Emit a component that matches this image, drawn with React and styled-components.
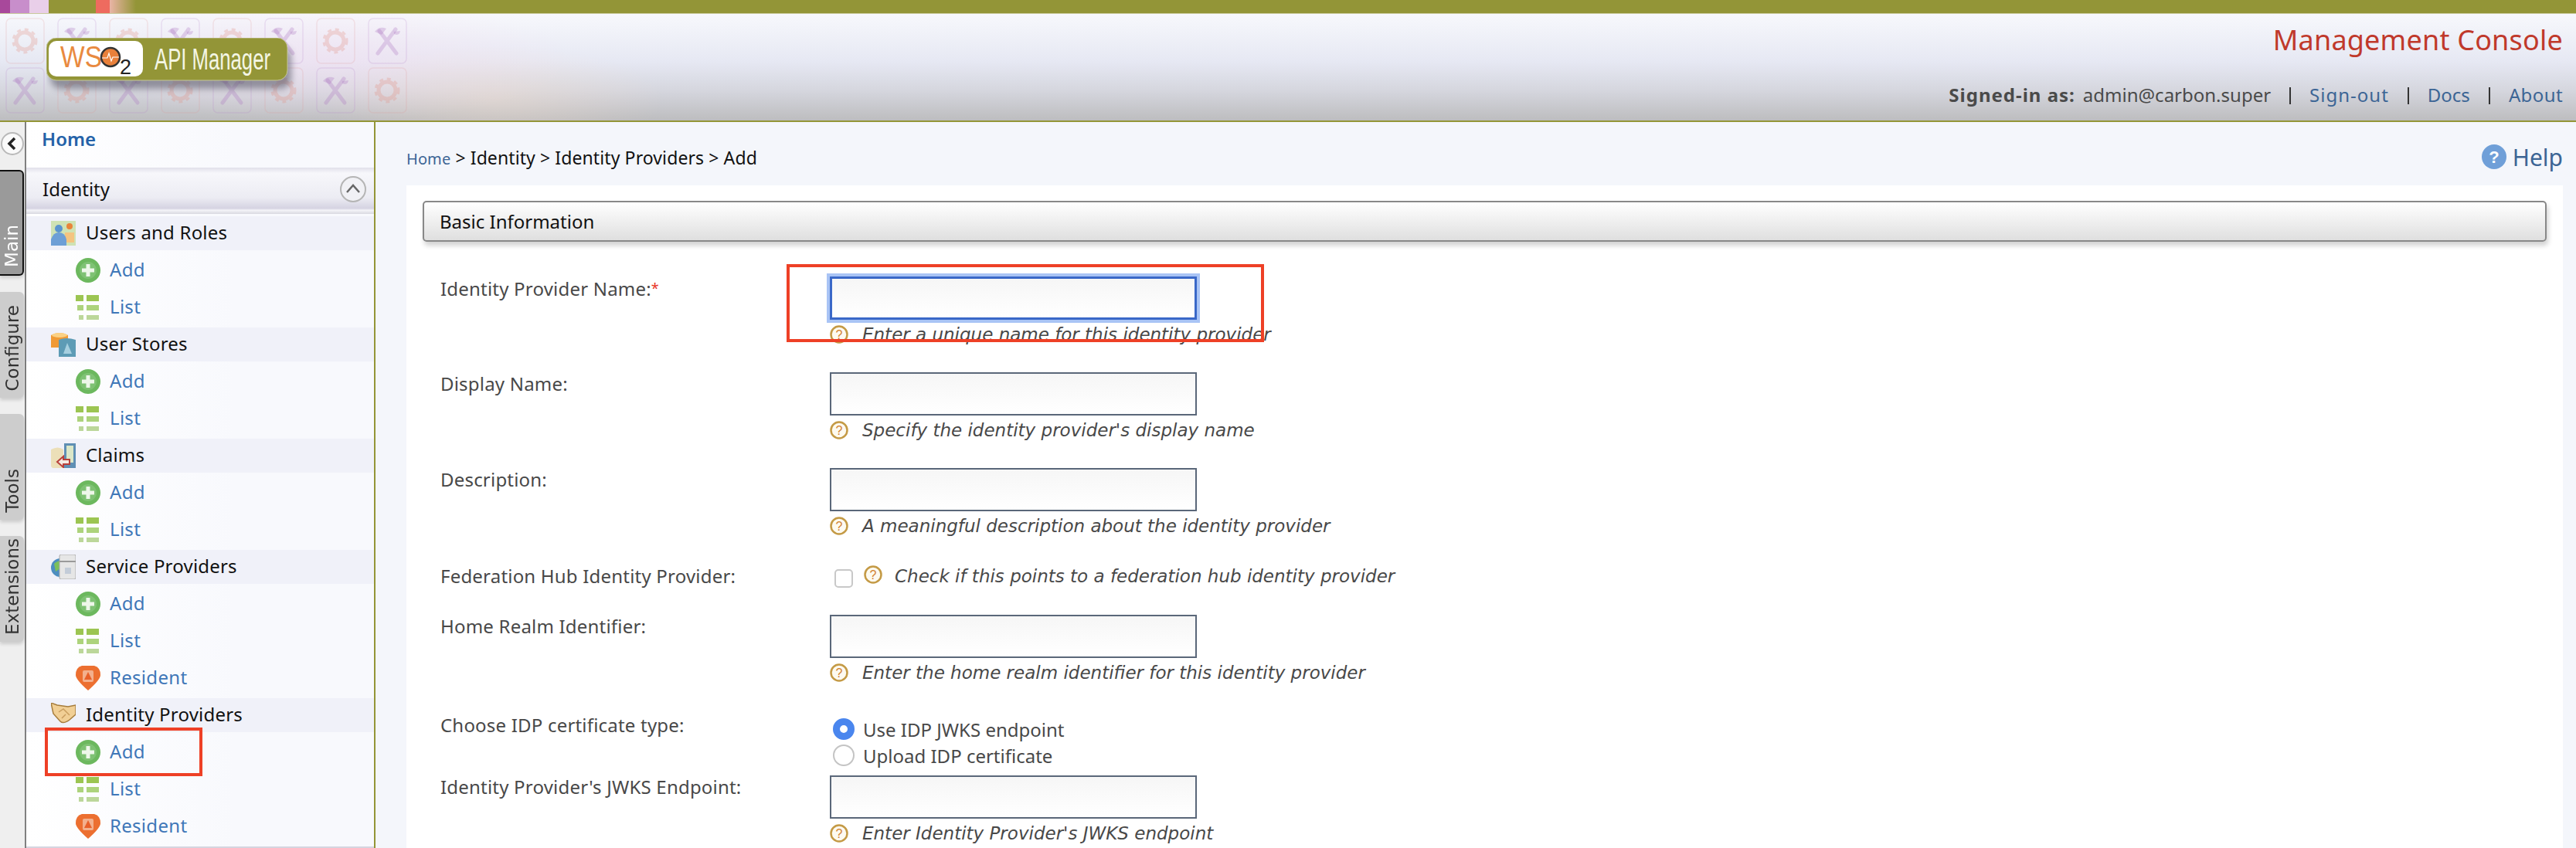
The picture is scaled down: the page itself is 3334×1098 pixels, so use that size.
import React from 'react';
import styled, { createGlobalStyle } from 'styled-components';

const FONT = '"Noto Sans", "Open Sans", sans-serif';

const GlobalStyle = createGlobalStyle`
	html, body {
		margin: 0;
		padding: 0;
		height: 1098px;
		overflow: hidden;
		background: #f4f6fb;
		font-family: ${FONT};
	}
	* {
		box-sizing: border-box;
	}
`;

const Page = styled.div`
	width: 3334px;
	height: 1098px;
	overflow: hidden;
	position: relative;
	display: flex;
	flex-direction: column;
`;

const TopStrip = styled.div`
	height: 18px;
	flex-shrink: 0;
	background: linear-gradient(
		to right,
		#a8489b 0 13px,
		#c88ecb 13px 38px,
		#e9cfe9 38px 63px,
		#939537 63px 124px,
		#ee6b5f 124px 142px,
		#eab4a6 142px,
		#939537 176px
	);
	border-bottom: 1px solid #c9ca9c;
`;

const Header = styled.header`
	height: 140px;
	flex-shrink: 0;
	position: relative;
	display: flex;
	justify-content: space-between;
	padding: 31px 17px 0 60px;
	background:
		radial-gradient(ellipse 220px 70px at 640px 110px, rgba(250, 225, 205, 0.35), transparent),
		radial-gradient(ellipse 320px 80px at 420px 60px, rgba(245, 220, 240, 0.45), transparent),
		linear-gradient(to bottom, #f7f8fc 0, #e6e8f3 45%, #d5d6de 72%, #bdbdbf 100%);
	border-bottom: 2px solid #939537;
`;

const TilePattern = styled.svg`
	position: absolute;
	left: 0;
	top: 0;
	width: 560px;
	height: 138px;
	filter: blur(0.7px);
`;

const LogoArt = styled.svg`
	position: relative;
	width: 326px;
	height: 76px;
	flex-shrink: 0;
`;

const HeaderRight = styled.div`
	position: relative;
	display: flex;
	flex-direction: column;
	align-items: flex-end;
	margin-top: -21px;
`;

const ConsoleTitle = styled.div`
	font-size: 36px;
	line-height: 48px;
	letter-spacing: 0.2px;
	color: #c0392b;
`;

const UserBar = styled.div`
	display: flex;
	align-items: center;
	margin-top: 31px;
	font-size: 24px;
	line-height: 32px;
	color: #4a4a4a;
`;

const UserName = styled.b`
	margin-right: 10px;
	font-weight: 700;
	letter-spacing: 1px;
`;

const BarLink = styled.a`
	color: #3c6595;
	letter-spacing: ${(p) => p.$track || 0}px;
	&::before {
		content: '';
		display: inline-block;
		width: 2px;
		height: 22px;
		margin: 0 24px 0 24px;
		background: #333;
		vertical-align: -3px;
	}
`;

const Body = styled.div`
	flex: 1;
	display: flex;
	min-height: 0;
`;

const TabRail = styled.nav`
	width: 34px;
	flex-shrink: 0;
	display: flex;
	flex-direction: column;
	background: #efefef;
	border-right: 2px solid #808080;
	padding-top: 12px;
`;

const CollapseButton = styled.svg`
	width: 30px;
	height: 32px;
	margin-left: 1px;
	margin-bottom: 18px;
	flex-shrink: 0;
`;

const Tab = styled.div`
	width: 31px;
	height: 137px;
	margin-bottom: 21px;
	flex-shrink: 0;
	display: flex;
	flex-direction: column;
	justify-content: flex-end;
	align-items: center;
	padding-bottom: 9px;
	border-radius: 0 6px 6px 0;
	background: ${(p) => (p.$active ? '#9a9a9a' : '#cdcdcd')};
	border: ${(p) => (p.$active ? '2px solid #111' : 'none')};
	border-left: none;
	color: ${(p) => (p.$active ? '#fff' : '#333')};
	box-shadow: 0 3px 4px rgba(0, 0, 0, 0.15);
`;

const TabLabel = styled.span`
	writing-mode: vertical-rl;
	transform: rotate(180deg);
	font-family: "DejaVu Sans", sans-serif;
	font-size: 23px;
	line-height: 28px;
`;

const Sidebar = styled.aside`
	width: 452px;
	flex-shrink: 0;
	background: linear-gradient(to right, #fff 0, #f8f9fd 60%);
	border-right: 2px solid #939537;
	overflow: hidden;
`;

const HomeLink = styled.a`
	display: block;
	height: 59px;
	padding: 4px 0 0 20px;
	font-size: 24px;
	line-height: 36px;
	font-weight: 600;
	color: #2462a8;
`;

const MenuHead = styled.div`
	height: 60px;
	display: flex;
	align-items: center;
	justify-content: space-between;
	padding: 0 10px 5px 21px;
	font-size: 24px;
	color: #111;
	background: linear-gradient(to bottom, #e1e0ea 0, #f7f7fb 12%, #ececf3 65%, #d5d3e2 88%, #f4f4f8 92%, #d8d8e0 100%);
`;

const MenuList = styled.div`
	display: flex;
	flex-direction: column;
	gap: 4px;
	margin-top: 3px;
	padding-bottom: 4px;
	border-bottom: 2px solid #d5d5e0;
`;

const SectionRow = styled.div`
	height: 44px;
	display: flex;
	align-items: center;
	gap: 13px;
	padding-left: 32px;
	background: #f0f1f9;
	font-size: 24px;
	letter-spacing: 0.2px;
	color: #111;
`;

const ItemRow = styled.a`
	height: 44px;
	display: flex;
	align-items: center;
	gap: 12px;
	padding-left: 64px;
	font-size: 24px;
	letter-spacing: 0.3px;
	color: #3f77b8;
`;

const RowText = styled.span`
	margin-top: -3px;
`;

const IconArt = styled.svg`
	width: 32px;
	height: 32px;
	flex-shrink: 0;
`;

const Main = styled.main`
	flex: 1;
	min-width: 0;
	padding: 0 17px 0 40px;
	background: #f4f6fb;
`;

const CrumbRow = styled.div`
	height: 82px;
	display: flex;
	justify-content: space-between;
	padding-top: 30px;
`;

const Crumbs = styled.div`
	font-size: 23px;
	line-height: 32px;
	letter-spacing: 0.1px;
	color: #111;
`;

const CrumbLink = styled.a`
	font-size: 20px;
	color: #3c6595;
`;

const HelpLink = styled.a`
	display: flex;
	align-items: center;
	gap: 8px;
	height: 40px;
	margin-top: -5px;
	font-size: 30px;
	color: #3c6595;
`;

const HelpBadge = styled.svg`
	width: 32px;
	height: 32px;
`;

const Panel = styled.section`
	background: #fff;
	padding: 20px 21px 0;
	height: 900px;
`;

const SectionBar = styled.div`
	height: 53px;
	display: flex;
	align-items: center;
	padding-left: 20px;
	font-size: 24px;
	color: #111;
	border: 2px solid #888;
	border-radius: 5px;
	background: linear-gradient(to bottom, #fff, #dfdfdf);
	box-shadow: 2px 5px 6px rgba(0, 0, 0, 0.18);
`;

const FormRow = styled.div`
	display: grid;
	grid-template-columns: 504px 1fr;
	align-items: start;
	margin-top: ${(p) => p.$gap}px;
	padding-left: 23px;
`;

const FieldLabel = styled.label`
	font-size: 24px;
	line-height: 30px;
	letter-spacing: 0.2px;
	color: #484848;
`;

const Required = styled.span`
	font-size: 18px;
	vertical-align: 3px;
	color: #e8321f;
`;

const TextInput = styled.input`
	display: block;
	width: 475px;
	height: 56px;
	padding: 0 8px;
	border: ${(p) => (p.$focused ? '3px solid #3a68c8' : '2px solid #5a6779')};
	border-radius: 0;
	outline: none;
	background: linear-gradient(to bottom, #f6f6f6, #fff);
	box-shadow: ${(p) => (p.$focused ? '0 0 0 4px #a9c4f5' : 'none')};
`;

const hintText = `
	font-family: "DejaVu Sans", sans-serif;
	font-size: 23px;
	font-style: italic;
	color: #484848;
	white-space: nowrap;
`;

const Hint = styled.div`
	${hintText}
	display: flex;
	align-items: center;
	gap: 18px;
	height: 30px;
	margin-top: 4px;
`;

const HintBadge = styled.svg`
	width: 24px;
	height: 24px;
	flex-shrink: 0;
	margin-top: ${(p) => p.$lift || 0}px;
`;

const CheckLine = styled.div`
	${hintText}
	display: flex;
	align-items: center;
	height: 30px;
	padding-left: 6px;
`;

const CheckBox = styled.span`
	width: 24px;
	height: 24px;
	margin-top: 6px;
	margin-right: 14px;
	border: 2px solid #c8c8c8;
	border-radius: 5px;
	background: #fff;
`;

const CheckHint = styled.span`
	margin-left: 16px;
`;

const RadioGroup = styled.div`
	display: flex;
	flex-direction: column;
	padding: 3px 0 0 4px;
`;

const RadioLine = styled.div`
	display: flex;
	align-items: center;
	gap: 11px;
	height: 34px;
	font-size: 24px;
	color: #484848;
`;

const RadioDot = styled.span`
	width: 28px;
	height: 28px;
	border-radius: 50%;
	background: #fff;
	border: ${(p) => (p.$on ? '9px solid #4a86ee' : '2px solid #c4c4c4')};
`;

const RedBox = styled.div`
	position: absolute;
	border: 4px solid #ee4026;
	left: ${(p) => p.$x}px;
	top: ${(p) => p.$y}px;
	width: ${(p) => p.$w}px;
	height: ${(p) => p.$h}px;
`;

const Gear = ({ x, y }) => (
	<g transform={`translate(${x} ${y})`}>
		<rect x="0" y="0" width="49" height="58" rx="6" fill="none" stroke="rgba(225, 150, 150, 0.2)" strokeWidth="1.5" />
		<circle cx="24" cy="29" r="11" fill="none" stroke="rgba(225, 140, 125, 0.28)" strokeWidth="5" />
		<circle cx="24" cy="29" r="15" fill="none" stroke="rgba(225, 140, 125, 0.28)" strokeWidth="3" strokeDasharray="5 5" />
	</g>
);

const Tools = ({ x, y }) => (
	<g transform={`translate(${x} ${y})`}>
		<rect x="0" y="0" width="49" height="58" rx="6" fill="none" stroke="rgba(180, 130, 200, 0.2)" strokeWidth="1.5" />
		<path d="M12 45 L35 14 M36 45 L14 16" stroke="rgba(170, 110, 190, 0.28)" strokeWidth="5" strokeLinecap="round" fill="none" />
		<path d="M8 17 Q14 9 23 13 L17 21 Z M32 9 L33 17 L41 16 Q40 23 33 20" fill="rgba(170, 110, 190, 0.28)" />
	</g>
);

const HeaderTiles = () => {
	const tiles = [];
	for (let i = 0; i < 8; i++) {
		const x = 8 + i * 67;
		tiles.push(i % 2 === 0 ? <Gear key={`a${i}`} x={x} y={6} /> : <Tools key={`a${i}`} x={x} y={6} />);
		tiles.push(i % 2 === 0 ? <Tools key={`b${i}`} x={x} y={70} /> : <Gear key={`b${i}`} x={x} y={70} />);
	}
	return <TilePattern viewBox="0 0 560 138">{tiles}</TilePattern>;
};

const Logo = () => (
	<LogoArt viewBox="0 0 326 76">
		<defs>
			<filter id="logoShadow" x="-5%" y="-20%" width="110%" height="160%">
				<feGaussianBlur stdDeviation="4" />
			</filter>
		</defs>
		<rect x="5" y="12" width="312" height="54" rx="14" fill="#5c5c6a" opacity="0.6" filter="url(#logoShadow)" />
		<rect x="0" y="0" width="312" height="55" rx="13" fill="#939537" stroke="#c5c69a" strokeWidth="1" />
		<rect x="3" y="4" width="122" height="46" rx="10" fill="#fff" />
		<text x="18" y="38" fontFamily="Liberation Sans, sans-serif" fontSize="38" fill="#e98a3f" textLength="54" lengthAdjust="spacingAndGlyphs">WS</text>
		<circle cx="83" cy="25" r="12" fill="#e9803a" stroke="#333" strokeWidth="2.5" />
		<path d="M72 26 H79 L81 20 L84 30 L86 25 H94" fill="none" stroke="#fff" strokeWidth="1.2" />
		<text x="95" y="47" fontFamily="Liberation Sans, sans-serif" fontSize="27" fill="#222">2</text>
		<text x="140" y="41" fontFamily="Liberation Sans, sans-serif" fontSize="38" fill="#f4f6e4" textLength="150" lengthAdjust="spacingAndGlyphs">API Manager</text>
	</LogoArt>
);

const AddIcon = () => (
	<IconArt viewBox="0 0 32 32">
		<circle cx="16" cy="16" r="16" fill="#6cb85e" />
		<circle cx="16" cy="16" r="11" fill="#7fc274" />
		<path d="M16 8 V24 M8 16 H24" stroke="#eef7ea" strokeWidth="5" />
	</IconArt>
);

const ListIcon = () => (
	<IconArt viewBox="0 0 32 32">
		<path d="M0 0 H10 V8 H0 Z M14 0 H30 V8 H14 Z" fill="#9cc552" />
		<path d="M2 13 H10 V20 H2 Z M14 13 H30 V20 H14 Z" fill="#add37c" />
		<path d="M4 26 H10 V32 H4 Z M14 26 H30 V32 H14 Z" fill="#bcd79a" />
	</IconArt>
);

const ResidentIcon = () => (
	<IconArt viewBox="0 0 32 32">
		<path d="M8 0 H24 Q32 2 32 12 Q32 18 16 32 Q0 18 0 12 Q0 2 8 0 Z" fill="#ec6f30" />
		<rect x="9" y="6" width="14" height="15" rx="2" fill="#f3b08d" />
		<path d="M11 18 L16 8 L21 18 Z" fill="#e8602a" />
	</IconArt>
);

const UsersIcon = () => (
	<IconArt viewBox="0 0 32 32">
		<rect width="32" height="32" fill="#cfe2b4" />
		<circle cx="10" cy="10" r="5" fill="#5a94cf" />
		<circle cx="24" cy="7" r="4" fill="#e9843a" />
		<path d="M18 15 H30 V28 H18 Z" fill="#f4c481" />
		<path d="M0 32 V24 Q3 15 10 15 Q18 15 20 24 V32 Z" fill="#6d9fd6" />
	</IconArt>
);

const StoresIcon = () => (
	<IconArt viewBox="0 0 32 32">
		<path d="M0 4 Q11 -2 22 4 V20 H0 Z" fill="#f09a35" />
		<ellipse cx="11" cy="4" rx="10" ry="3" fill="#fbd184" />
		<path d="M10 10 Q20 6 32 10 V32 H10 Z" fill="#5d9bb5" />
		<path d="M16 28 L21 14 L27 28 Z" fill="#a6cfdf" />
	</IconArt>
);

const ClaimsIcon = () => (
	<IconArt viewBox="0 0 32 32">
		<path d="M0 8 Q9 3 16 8 V32 H3 Q0 32 0 28 Z" fill="#ecdfb8" />
		<rect x="17" y="0" width="15" height="32" fill="#5f8fb4" />
		<rect x="20" y="3" width="9" height="22" fill="#dbe7c8" />
		<path d="M8 24 L16 17 V21 H24 V27 H16 V31 Z" fill="#f5ebe3" stroke="#b8403a" strokeWidth="2" />
	</IconArt>
);

const ServiceIcon = () => (
	<IconArt viewBox="0 0 32 32">
		<circle cx="12" cy="17" r="12" fill="#4d8ec0" />
		<path d="M4 12 Q10 6 14 10 L12 18 L6 22 Z" fill="#7cc05a" />
		<rect x="11" y="0" width="21" height="32" rx="2" fill="#e6e6e6" stroke="#a9a9a9" />
		<rect x="11" y="8" width="21" height="2" fill="#9a9a9a" />
		<rect x="18" y="17" width="8" height="8" fill="#c3ccd8" />
	</IconArt>
);

const HandshakeIcon = () => (
	<IconArt viewBox="0 0 32 32">
		<path d="M0 0 L8 3 L22 5 L32 3 V15 L24 22 Q16 28 12 24 L3 14 Z" fill="#f1cf95" stroke="#a67c3c" strokeWidth="1.5" />
		<path d="M10 12 L16 8 L24 16 M14 20 L19 15" stroke="#c99d5e" strokeWidth="1.5" fill="none" />
	</IconArt>
);

const sectionIcons = {
	users: UsersIcon,
	stores: StoresIcon,
	claims: ClaimsIcon,
	service: ServiceIcon,
	idp: HandshakeIcon
};

const menu = [
	{ title: 'Users and Roles', icon: 'users', items: ['Add', 'List'] },
	{ title: 'User Stores', icon: 'stores', items: ['Add', 'List'] },
	{ title: 'Claims', icon: 'claims', items: ['Add', 'List'] },
	{ title: 'Service Providers', icon: 'service', items: ['Add', 'List', 'Resident'] },
	{ title: 'Identity Providers', icon: 'idp', items: ['Add', 'List', 'Resident'] }
];

const itemIcons = { Add: AddIcon, List: ListIcon, Resident: ResidentIcon };

const tabs = ['Main', 'Configure', 'Tools', 'Extensions'];

const QuestionBadge = ({ lift }) => (
	<HintBadge viewBox="0 0 24 24" $lift={lift}>
		<circle cx="12" cy="12" r="10.5" fill="#fdfaf0" stroke="#c49a45" strokeWidth="2.5" />
		<text x="12" y="18" textAnchor="middle" fontFamily="Liberation Sans, sans-serif" fontSize="16" fontStyle="normal" fill="#d2822f">?</text>
	</HintBadge>
);

const FieldRow = ({ gap, label, required, focused, hint }) => (
	<FormRow $gap={gap}>
		<FieldLabel>
			{label}
			{required && <Required>*</Required>}
		</FieldLabel>
		<div>
			<TextInput $focused={focused} />
			<Hint>
				<QuestionBadge />
				{hint}
			</Hint>
		</div>
	</FormRow>
);

export default function App() {
	return (
		<Page>
			<GlobalStyle />
			<TopStrip />
			<Header>
				<HeaderTiles />
				<Logo />
				<HeaderRight>
					<ConsoleTitle>Management Console</ConsoleTitle>
					<UserBar>
						<UserName>Signed-in as:</UserName>
						admin@carbon.super
						<BarLink $track={1}>Sign-out</BarLink>
						<BarLink>Docs</BarLink>
						<BarLink $track={0.4}>About</BarLink>
					</UserBar>
				</HeaderRight>
			</Header>
			<Body>
				<TabRail>
					<CollapseButton viewBox="0 0 30 32">
						<circle cx="15" cy="16" r="14" fill="#fafafa" stroke="#b9b9b9" strokeWidth="2" />
						<path d="M18 9 L11 16 L18 23" fill="none" stroke="#222" strokeWidth="3.5" />
					</CollapseButton>
					{tabs.map((t, i) => (
						<Tab key={t} $active={i === 0}>
							<TabLabel>{t}</TabLabel>
						</Tab>
					))}
				</TabRail>
				<Sidebar>
					<HomeLink>Home</HomeLink>
					<MenuHead>
						Identity
						<svg width="34" height="34" viewBox="0 0 34 34">
							<circle cx="17" cy="17" r="16" fill="#f1f1f5" stroke="#b5b5b5" strokeWidth="2" />
							<path d="M9 21 L17 12 L25 21" fill="none" stroke="#666" strokeWidth="2.5" />
						</svg>
					</MenuHead>
					<MenuList>
						{menu.map((section) => {
							const SectionIcon = sectionIcons[section.icon];
							return (
								<React.Fragment key={section.title}>
									<SectionRow>
										<SectionIcon />
										<RowText>{section.title}</RowText>
									</SectionRow>
									{section.items.map((item) => {
										const ItemIcon = itemIcons[item];
										return (
											<ItemRow key={item}>
												<ItemIcon />
												<RowText>{item}</RowText>
											</ItemRow>
										);
									})}
								</React.Fragment>
							);
						})}
					</MenuList>
				</Sidebar>
				<Main>
					<CrumbRow>
						<Crumbs>
							<CrumbLink>Home</CrumbLink> &gt; Identity &gt; Identity Providers &gt; Add
						</Crumbs>
						<HelpLink>
							<HelpBadge viewBox="0 0 32 32">
								<circle cx="16" cy="16" r="16" fill="#6f9fd8" />
								<text x="16" y="24" textAnchor="middle" fontFamily="Liberation Sans, sans-serif" fontWeight="700" fontSize="22" fill="#fff">?</text>
							</HelpBadge>
							Help
						</HelpLink>
					</CrumbRow>
					<Panel>
						<SectionBar>Basic Information</SectionBar>
						<FieldRow gap={45} label="Identity Provider Name:" required focused hint="Enter a unique name for this identity provider" />
						<FieldRow gap={34} label="Display Name:" hint="Specify the identity provider's display name" />
						<FieldRow gap={34} label="Description:" hint="A meaningful description about the identity provider" />
						<FormRow $gap={35}>
							<FieldLabel>Federation Hub Identity Provider:</FieldLabel>
							<CheckLine>
								<CheckBox />
								<QuestionBadge lift={-4} />
								<CheckHint>Check if this points to a federation hub identity provider</CheckHint>
							</CheckLine>
						</FormRow>
						<FieldRow gap={35} label="Home Realm Identifier:" hint="Enter the home realm identifier for this identity provider" />
						<FormRow $gap={38}>
							<FieldLabel>Choose IDP certificate type:</FieldLabel>
							<RadioGroup>
								<RadioLine>
									<RadioDot $on />
									Use IDP JWKS endpoint
								</RadioLine>
								<RadioLine>
									<RadioDot />
									Upload IDP certificate
								</RadioLine>
							</RadioGroup>
						</FormRow>
						<FieldRow gap={9} label="Identity Provider's JWKS Endpoint:" hint="Enter Identity Provider's JWKS endpoint" />
					</Panel>
				</Main>
			</Body>
			<RedBox $x={1018} $y={342} $w={618} $h={101} />
			<RedBox $x={58} $y={942} $w={204} $h={63} />
		</Page>
	);
}
